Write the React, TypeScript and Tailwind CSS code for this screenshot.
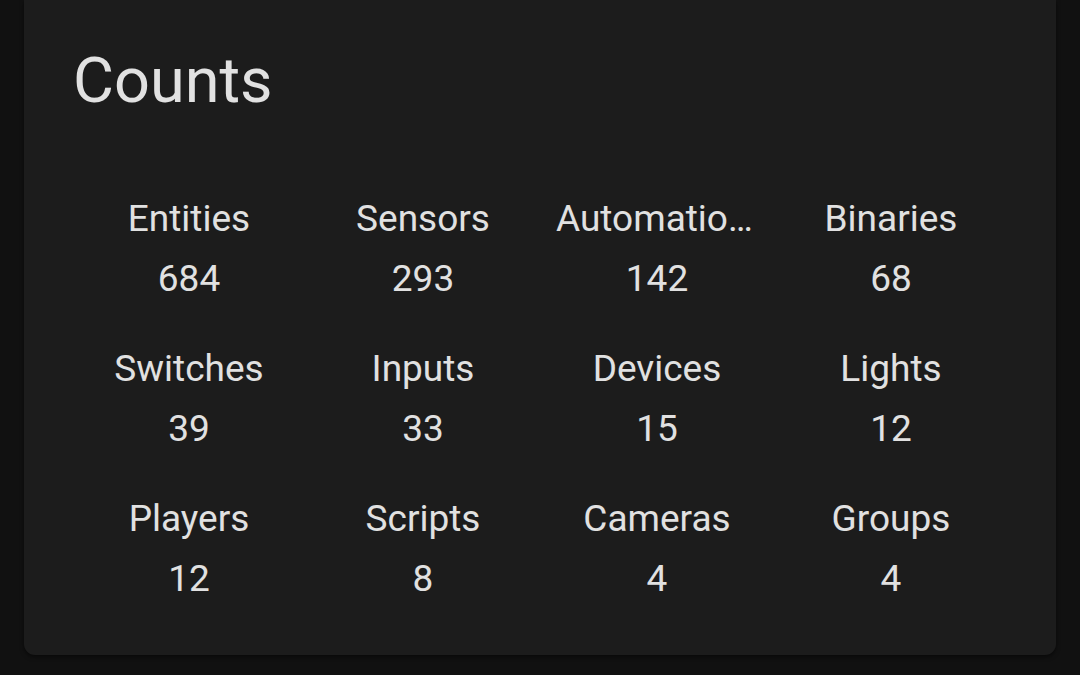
import React from 'react';

interface CountItem {
  label: string;
  value: number;
}

const counts: CountItem[] = [
  { label: 'Entities', value: 684 },
  { label: 'Sensors', value: 293 },
  { label: 'Automations', value: 142 },
  { label: 'Binaries', value: 68 },
  { label: 'Switches', value: 39 },
  { label: 'Inputs', value: 33 },
  { label: 'Devices', value: 15 },
  { label: 'Lights', value: 12 },
  { label: 'Players', value: 12 },
  { label: 'Scripts', value: 8 },
  { label: 'Cameras', value: 4 },
  { label: 'Groups', value: 4 },
];

const CountCell = ({ label, value }: CountItem) => (
  <div className="flex flex-col items-center px-4 min-w-0">
    <span className="block w-full h-[60px] leading-[60px] text-center truncate">{label}</span>
    <span className="block h-[60px] leading-[60px]">{value}</span>
  </div>
);

export default function App() {
  return (
    <div
      className="w-[1080px] h-[675px] bg-[#111111] px-6 overflow-hidden text-[#e1e1e1]"
      style={{ fontFamily: 'Roboto, "Liberation Sans", sans-serif' }}
    >
      {/* 卡片 */}
      <div className="bg-[#1c1c1c] rounded-b-[11px] shadow-[0_2px_4px_rgba(0,0,0,0.5)] pt-[41px] pb-[46px] px-12">
        <h1 className="text-[63px] leading-[80px] font-normal ml-px">Counts</h1>
        <div className="grid grid-cols-4 gap-y-[30px] mt-[68px] text-[37px]">
          {counts.map((c) => (
            <CountCell key={c.label} label={c.label} value={c.value} />
          ))}
        </div>
      </div>
    </div>
  );
}
